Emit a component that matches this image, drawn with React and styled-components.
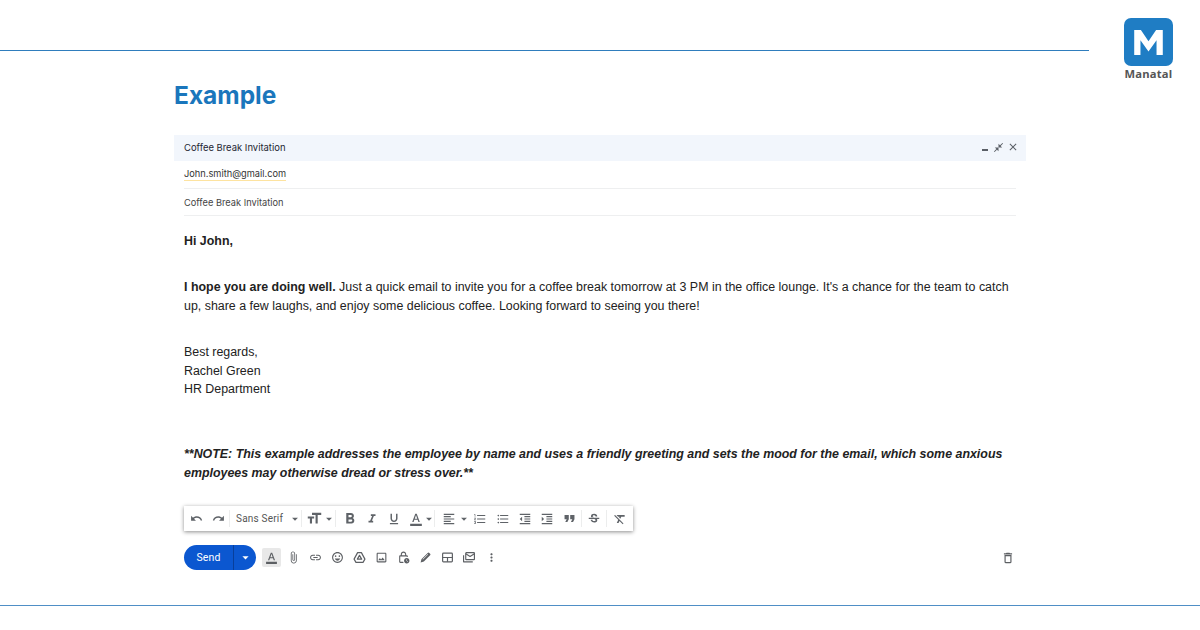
import React from 'react'
import styled, { createGlobalStyle } from 'styled-components'
import {
    MdUndo, MdRedo, MdArrowDropDown, MdTextFields, MdFormatBold, MdFormatItalic, MdFormatUnderlined,
    MdFormatColorText, MdFormatAlignLeft, MdFormatListNumbered, MdFormatListBulleted,
    MdFormatIndentDecrease, MdFormatIndentIncrease, MdFormatQuote, MdStrikethroughS, MdFormatClear,
    MdAttachFile, MdLink, MdOutlineEmojiEmotions, MdOutlineImage, MdOutlineLockClock,
    MdMoreVert, MdOutlineDelete, MdClose, MdCloseFullscreen
} from 'react-icons/md'

const GlobalStyle = createGlobalStyle`
    html, body { margin: 0; padding: 0; background: #fff; }
    body { font-family: "Liberation Sans", Arial, sans-serif; }
    svg { flex: none; }
`

const Page = styled.div`
    position: relative;
    width: 1200px;
    height: 630px;
    overflow: hidden;
    background: #fff;
    display: flex;
    flex-direction: column;
`
const TopRule = styled.div`
    width: 1089px;
    height: 50px;
    flex: none;
    border-bottom: 1px solid #2f7dbd;
`
const Logo = styled.div`
    position: absolute;
    top: 18px;
    left: 1124px;
    width: 49px;
    display: flex;
    flex-direction: column;
    align-items: center;
`
const LogoMark = styled.div`
    width: 49px;
    height: 48px;
    border-radius: 7px;
    background: #1f7dc4;
    display: flex;
    align-items: center;
    justify-content: center;
`
const LogoText = styled.div`
    margin-top: 1px;
    font: 700 11.2px/14px "Open Sans", sans-serif;
    letter-spacing: 0.2px;
    color: #555;
`
const Main = styled.main`
    flex: 1;
    padding: 28px 0 0 174px;
`
const Title = styled.h1`
    margin: 0;
    font: 700 24.5px/32px "Inter", sans-serif;
    color: #1a76bc;
`
const Compose = styled.section`
    margin-top: 24px;
    width: 852px;
`
const ComposeHead = styled.div`
    height: 26px;
    box-sizing: border-box;
    padding: 0 7px 2px 10px;
    background: #f2f6fc;
    display: flex;
    align-items: center;
    justify-content: space-between;
    font: 400 9.45px "Inter", sans-serif;
    color: #1f2733;
`
const HeadIcons = styled.div`
    display: flex;
    align-items: center;
    gap: 3px;
    color: #5a5f66;
    font-size: 10px;
`
const MinimizeBar = styled.span`
    width: 6px;
    height: 2px;
    margin: 5px 2px 0 0;
    background: #5a5f66;
`
const FieldRow = styled.div`
    height: ${props => props.$h || 27}px;
    box-sizing: border-box;
    margin: 0 10px;
    border-bottom: 1px solid #eeeff0;
    display: flex;
    align-items: center;
    font: 400 9.25px "Inter", sans-serif;
    color: #444;
`
const Email = styled.span`
    color: #333;
    border-bottom: 1px solid #fde3a0;
    line-height: 12px;
`
const Body = styled.div`
    padding: 16px 10px 0;
    font-size: 12.42px;
    line-height: 18.67px;
    color: #222;
`
const Para = styled.p`
    margin: 0 0 ${props => props.$gap || 27.5}px;
`
const Note = styled.p`
    margin: 0;
    font-weight: 700;
    font-style: italic;
`
const Toolbar = styled.div`
    margin: 24px 0 0 10px;
    width: 448px;
    height: 25px;
    background: #fff;
    box-shadow: 0 1px 4px rgba(0, 0, 0, 0.45);
    display: flex;
    align-items: center;
    padding-left: 1px;
    color: #5f6368;
`
const ToolButton = styled.span`
    width: ${props => props.$w || 22}px;
    flex: none;
    display: flex;
    align-items: center;
    justify-content: center;
    font-size: ${props => props.$size || 14}px;
    transform: ${props => props.$flip ? 'scaleX(-1)' : 'none'};
`
const Divider = styled.span`
    width: 1px;
    height: 17px;
    flex: none;
    margin: ${props => props.$margin || '0 3px'};
    background: #eceded;
`
const FontPick = styled.span`
    font: 400 10px "Roboto", sans-serif;
    letter-spacing: 0.2px;
    color: #555;
    width: 55px;
    flex: none;
    padding-left: 1px;
    box-sizing: border-box;
`
const Caret = styled.span`
    width: ${props => props.$w || 10}px;
    flex: none;
    display: flex;
    justify-content: center;
    font-size: 14px;
`
const BottomBar = styled.div`
    margin: 14px 0 0 10px;
    width: 832px;
    height: 25px;
    display: flex;
    align-items: center;
    color: #5c5f63;
`
const SendButton = styled.div`
    width: 72px;
    height: 25px;
    flex: none;
    display: flex;
    border-radius: 13px;
    overflow: hidden;
    background: #0b57d0;
    color: #fff;
    margin-right: 6px;
`
const SendLabel = styled.span`
    width: 49px;
    display: flex;
    align-items: center;
    justify-content: center;
    border-right: 1px solid #083f9b;
    font: 400 10.5px "Roboto", sans-serif;
    letter-spacing: 0.1px;
`
const SendCaret = styled.span`
    flex: 1;
    display: flex;
    align-items: center;
    justify-content: center;
    font-size: 15px;
`
const ActionIcon = styled.span`
    width: ${props => props.$active ? 19 : 22}px;
    height: 19px;
    flex: none;
    margin-right: ${props => props.$active ? 1 : 0}px;
    display: flex;
    align-items: center;
    justify-content: center;
    font-size: 13px;
    border-radius: 2px;
    background: ${props => props.$active ? '#e8e8e8' : 'transparent'};
`
const Trash = styled.span`
    margin-left: auto;
    margin-right: 1px;
    display: flex;
    font-size: 14px;
`
const BottomRule = styled.div`
    position: absolute;
    left: 0;
    right: 0;
    top: 605px;
    height: 1px;
    background: #4f8fc6;
`

const DriveIcon = () => (
    <svg width="13" height="13" viewBox="0 0 24 24" fill="none" stroke="currentColor" strokeWidth="2.2" strokeLinejoin="round">
        <path d="M8.5 3h7L22 15l-3.5 6h-13L2 15z" />
        <path d="M12 8l-4 7h8z" />
    </svg>
)
const PenIcon = () => (
    <svg width="13" height="13" viewBox="0 0 24 24" fill="currentColor">
        <path d="M3 21l1.5-6L16 3.5a2.1 2.1 0 0 1 3 0l1.5 1.5a2.1 2.1 0 0 1 0 3L9 19.500z" />
        <path d="M7 15.500L16.500 6" stroke="#fff" strokeWidth="1.400" />
    </svg>
)
const LayoutIcon = () => (
    <svg width="13" height="13" viewBox="0 0 24 24" fill="none" stroke="currentColor" strokeWidth="2.200">
        <rect x="3" y="4" width="18" height="16" rx="1.500" />
        <path d="M3 12h18M12 12v8" />
    </svg>
)
const MailStackIcon = () => (
    <svg width="14" height="13" viewBox="0 0 24 24" fill="none" stroke="currentColor" strokeWidth="2.100" strokeLinejoin="round">
        <path d="M2 8v12h17" />
        <rect x="6" y="3" width="16" height="13" rx="1" />
        <path d="M6 5l8 5 8-5" />
    </svg>
)

const ACTIONS = [
    <MdAttachFile />, <MdLink />, <MdOutlineEmojiEmotions />, <DriveIcon />, <MdOutlineImage />,
    <MdOutlineLockClock />, <PenIcon />, <LayoutIcon />, <MailStackIcon />, <MdMoreVert />
]

export default function App() {
    return (
        <Page>
            <GlobalStyle />
            <TopRule />
            <Logo>
                <LogoMark>
                    <svg width="29" height="25" viewBox="0 0 32 28">
                        <path d="M0 28V0h7.500L16 12.500 24.500 0H32v28h-7V11.500L16 24 7 11.500V28z" fill="#fff" />
                    </svg>
                </LogoMark>
                <LogoText>Manatal</LogoText>
            </Logo>
            <Main>
                <Title>Example</Title>
                <Compose>
                    <ComposeHead>
                        <span>Coffee Break Invitation</span>
                        <HeadIcons>
                            <MinimizeBar />
                            <MdCloseFullscreen size={11} />
                            <MdClose size={12} />
                        </HeadIcons>
                    </ComposeHead>
                    <FieldRow $h={28}><Email>John.smith@gmail.com</Email></FieldRow>
                    <FieldRow>Coffee Break Invitation</FieldRow>
                    <Body>
                        <Para><strong>Hi John,</strong></Para>
                        <Para>
                            <strong>I hope you are doing well.</strong> Just a quick email to invite you for a coffee break tomorrow at 3 PM in the office lounge. It's a chance for the team to catch up, share a few laughs, and enjoy some delicious coffee. Looking forward to seeing you there!
                        </Para>
                        <Para $gap={46}>Best regards,<br />Rachel Green<br />HR Department</Para>
                        <Note>**NOTE: This example addresses the employee by name and uses a friendly greeting and sets the mood for the email, which some anxious employees may otherwise dread or stress over.**</Note>
                    </Body>
                    <Toolbar>
                        <ToolButton $size={13}><MdUndo /></ToolButton>
                        <ToolButton $size={13}><MdRedo /></ToolButton>
                        <Divider $margin="0 5px 0 0" />
                        <FontPick>Sans Serif</FontPick>
                        <Caret><MdArrowDropDown /></Caret>
                        <Divider $margin="0 2px 0 1px" />
                        <ToolButton $size={17} $flip><MdTextFields /></ToolButton>
                        <Caret $w={6}><MdArrowDropDown /></Caret>
                        <Divider />
                        <ToolButton $size={18}><MdFormatBold /></ToolButton>
                        <ToolButton><MdFormatItalic /></ToolButton>
                        <ToolButton><MdFormatUnderlined /></ToolButton>
                        <ToolButton><MdFormatColorText /></ToolButton>
                        <Caret $w={4}><MdArrowDropDown /></Caret>
                        <Divider />
                        <ToolButton><MdFormatAlignLeft /></ToolButton>
                        <Caret $w={8}><MdArrowDropDown /></Caret>
                        <ToolButton $w={24}><MdFormatListNumbered /></ToolButton>
                        <ToolButton><MdFormatListBulleted /></ToolButton>
                        <ToolButton><MdFormatIndentDecrease /></ToolButton>
                        <ToolButton><MdFormatIndentIncrease /></ToolButton>
                        <ToolButton $size={17}><MdFormatQuote /></ToolButton>
                        <Divider $margin="0 1px" />
                        <ToolButton><MdStrikethroughS /></ToolButton>
                        <Divider $margin="0 2px 0 1px" />
                        <ToolButton><MdFormatClear /></ToolButton>
                    </Toolbar>
                    <BottomBar>
                        <SendButton>
                            <SendLabel>Send</SendLabel>
                            <SendCaret><MdArrowDropDown /></SendCaret>
                        </SendButton>
                        <ActionIcon $active><MdFormatColorText /></ActionIcon>
                        {ACTIONS.map((icon, key) => (
                            <ActionIcon key={key}>{icon}</ActionIcon>
                        ))}
                        <Trash><MdOutlineDelete /></Trash>
                    </BottomBar>
                </Compose>
            </Main>
            <BottomRule />
        </Page>
    )
}
